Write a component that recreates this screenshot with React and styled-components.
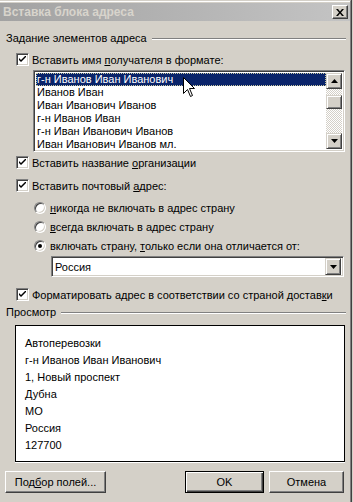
import React from "react";
import styled, { createGlobalStyle } from "styled-components";

const Global = createGlobalStyle`
  html, body {
    margin: 0;
    padding: 0;
    background: #d4d0c8;
  }
  body {
    font-family: "Liberation Sans", Arial, sans-serif;
    font-size: 11px;
    color: #000;
  }
`;

const Window = styled.div`
  width: 350px;
  height: 499px;
  background: #d4d0c8;
  border-top: 1px solid #d4d0c8;
  border-right: 1px solid #808080;
  box-shadow: 1px 0 0 #404040;
  padding-top: 2px;
  position: relative;
  &::before {
    content: "";
    position: absolute;
    left: 0;
    right: 0;
    top: 0;
    height: 1px;
    background: #fff;
  }
`;

const TitleBar = styled.div`
  height: 18px;
  display: flex;
  align-items: center;
  justify-content: space-between;
  padding: 0 2px 0 3px;
  background: linear-gradient(to right, #a2a2a2, #c4c4c4);
  color: #d8d4cc;
  font-weight: bold;
  font-size: 12px;
`;

const CloseButton = styled.div`
  width: 16px;
  height: 14px;
  box-sizing: border-box;
  display: flex;
  align-items: center;
  justify-content: center;
  background: #d4d0c8;
  border: 1px solid;
  border-color: #fff #404040 #404040 #fff;
  box-shadow: inset -1px -1px #808080;
`;

const Body = styled.div`
  display: flex;
  flex-direction: column;
`;

const GroupHeader = styled.div`
  display: flex;
  align-items: center;
  gap: 5px;
  height: 14px;
  margin-top: ${(p) => p.$top}px;
  padding-left: 6px;
  margin-right: 4px;
`;

const EtchedLine = styled.div`
  flex: 1;
  border-top: 1px solid #808080;
  border-bottom: 1px solid #fff;
  margin-top: 1px;
`;

const OptionRow = styled.label`
  display: flex;
  align-items: center;
  gap: ${(p) => p.$gap || 3}px;
  height: 13px;
  margin-top: ${(p) => p.$top}px;
  padding-left: ${(p) => p.$indent}px;
  white-space: nowrap;
`;

const CheckBox = styled.span`
  width: 13px;
  height: 13px;
  box-sizing: border-box;
  flex: none;
  display: flex;
  align-items: center;
  justify-content: center;
  background: #fff;
  border: 1px solid;
  border-color: #808080 #fff #fff #808080;
  box-shadow: inset 1px 1px #404040, inset -1px -1px #d4d0c8;
`;

const Radio = styled.span`
  width: 12px;
  height: 12px;
  box-sizing: border-box;
  flex: none;
  margin-left: -1px;
  border-radius: 50%;
  background: #fff;
  border: 1px solid;
  border-color: #808080 #fff #fff #808080;
  box-shadow: inset 1px 1px #404040, inset -1px -1px #d4d0c8;
  display: flex;
  align-items: center;
  justify-content: center;
  &::after {
    content: "";
    width: 4px;
    height: 4px;
    border-radius: 50%;
    background: #000;
    display: ${(p) => (p.$checked ? "block" : "none")};
  }
`;

const Sunken = styled.div`
  box-sizing: border-box;
  background: #fff;
  border: 1px solid;
  border-color: #808080 #fff #fff #808080;
  box-shadow: inset 1px 1px #404040, inset -1px -1px #d4d0c8;
`;

const ListBox = styled(Sunken)`
  position: relative;
  display: flex;
  height: 82px;
  margin: 4px 5px 0 33px;
  padding: 2px;
`;

const Items = styled.div`
  flex: 1;
  display: flex;
  flex-direction: column;
`;

const ListItem = styled.div`
  height: 13px;
  line-height: 13px;
  padding-left: 1px;
  box-sizing: border-box;
  white-space: nowrap;
  background: ${(p) => (p.$selected ? "#0a246a" : "transparent")};
  color: ${(p) => (p.$selected ? "#fff" : "#000")};
  outline: ${(p) => (p.$selected ? "1px dotted #c8c8a0" : "none")};
  outline-offset: -1px;
`;

const ScrollBar = styled.div`
  width: 16px;
  display: flex;
  flex-direction: column;
`;

const Raised = styled.div`
  box-sizing: border-box;
  background: #d4d0c8;
  border: 1px solid;
  border-color: #d4d0c8 #404040 #404040 #d4d0c8;
  box-shadow: inset 1px 1px #fff, inset -1px -1px #808080;
  display: flex;
  align-items: center;
  justify-content: center;
`;

const ScrollButton = styled(Raised)`
  height: 16px;
  flex: none;
`;

const Track = styled.div`
  flex: 1;
  background: repeating-conic-gradient(#d4d0c8 0 25%, #fff 0 50%) 0 0 / 2px 2px;
  display: flex;
  flex-direction: column;
  padding-top: 6px;
`;

const Thumb = styled(Raised)`
  height: 14px;
`;

const Cursor = styled.svg`
  position: absolute;
  left: 149px;
  top: 6px;
`;

const Combo = styled(Sunken)`
  display: flex;
  align-items: center;
  height: 21px;
  margin: 4px 6px 0 51px;
  padding: 2px;
`;

const ComboText = styled.div`
  flex: 1;
  padding-left: 1px;
`;

const DropButton = styled(Raised)`
  width: 16px;
  height: 17px;
`;

const Preview = styled.div`
  height: 137px;
  box-sizing: border-box;
  margin: 6px 5px 0 15px;
  padding: 9px 9px;
  background: #fff;
  border: 1px solid #000;
  box-shadow: 0 1px 0 #fff;
`;

const PreviewLine = styled.div`
  line-height: 17px;
  height: 17px;
`;

const ButtonBar = styled.div`
  display: flex;
  margin: 9px 6px 0 5px;
  gap: 5px;
`;

const Button = styled.button`
  font: inherit;
  color: #000;
  height: 22px;
  width: ${(p) => p.$w}px;
  padding: 0;
  box-sizing: border-box;
  background: #d4d0c8;
  margin-left: ${(p) => (p.$push ? "auto" : "0")};
  border: 1px solid;
  border-color: ${(p) => (p.$default ? "#000" : "#fff #404040 #404040 #fff")};
  box-shadow: ${(p) =>
    p.$default
      ? "inset 1px 1px #fff, inset -1px -1px #404040, inset -2px -2px #808080"
      : "inset -1px -1px #808080"};
`;

const U = styled.span`
  text-decoration: underline;
`;

const Check = () => (
  <CheckBox>
    <svg width="7" height="7" viewBox="0 0 7 7">
      <path d="M0 2 L0 4 L2 6 L7 1 L7 -1 L2 4 Z" fill="#000" />
    </svg>
  </CheckBox>
);

const ArrowUp = () => (
  <svg width="7" height="4" viewBox="0 0 7 4">
    <path d="M3.5 0 L7 4 L0 4 Z" fill="#000" />
  </svg>
);

const ArrowDown = () => (
  <svg width="7" height="4" viewBox="0 0 7 4">
    <path d="M0 0 L7 0 L3.5 4 Z" fill="#000" />
  </svg>
);

const names = [
  "г-н Иванов Иван Иванович",
  "Иванов Иван",
  "Иван Иванович Иванов",
  "г-н Иванов Иван",
  "г-н Иван Иванович Иванов",
  "Иван Иванович Иванов мл.",
];

const preview = [
  "Автоперевозки",
  "г-н Иванов Иван Иванович",
  "1, Новый проспект",
  "Дубна",
  "МО",
  "Россия",
  "127700",
];

export default function App() {
  return (
    <>
      <Global />
      <Window>
        <TitleBar>
          <span>Вставка блока адреса</span>
          <CloseButton>
            <svg width="8" height="7" viewBox="0 0 8 7">
              <path d="M0 0 L2 0 L4 2.5 L6 0 L8 0 L5 3.5 L8 7 L6 7 L4 4.5 L2 7 L0 7 L3 3.5 Z" fill="#000" />
            </svg>
          </CloseButton>
        </TitleBar>
        <Body>
          <GroupHeader $top={10}>
            <span>Задание элементов адреса</span>
            <EtchedLine />
          </GroupHeader>

          <OptionRow $top={8} $indent={16}>
            <Check />
            <span>
              Вставить имя <U>п</U>олучателя в формате:
            </span>
          </OptionRow>

          <ListBox>
            <Items>
              {names.map((n, i) => (
                <ListItem key={n} $selected={i === 0}>
                  {n}
                </ListItem>
              ))}
            </Items>
            <ScrollBar>
              <ScrollButton>
                <ArrowUp />
              </ScrollButton>
              <Track>
                <Thumb />
              </Track>
              <ScrollButton>
                <ArrowDown />
              </ScrollButton>
            </ScrollBar>
            <Cursor width="13" height="21" viewBox="0 0 13 21">
              <path
                d="M0.5 0.5 L0.5 16.5 L4.5 12.5 L7.5 19.5 L9.5 18.5 L6.5 11.5 L11.5 11.5 Z"
                fill="#fff"
                stroke="#000"
                strokeWidth="1"
              />
            </Cursor>
          </ListBox>

          <OptionRow $top={4} $indent={16}>
            <Check />
            <span>
              Вставить название <U>о</U>рганизации
            </span>
          </OptionRow>

          <OptionRow $top={10} $indent={16}>
            <Check />
            <span>
              Вставить почтовый <U>а</U>дрес:
            </span>
          </OptionRow>

          <OptionRow $top={9} $indent={35} $gap={4}>
            <Radio />
            <span>
              <U>н</U>икогда не включать в адрес страну
            </span>
          </OptionRow>
          <OptionRow $top={6} $indent={35} $gap={4}>
            <Radio />
            <span>
              <U>в</U>сегда включать в адрес страну
            </span>
          </OptionRow>
          <OptionRow $top={6} $indent={35} $gap={4}>
            <Radio $checked />
            <span>
              включать страну, <U>т</U>олько если она отличается от:
            </span>
          </OptionRow>

          <Combo>
            <ComboText>Россия</ComboText>
            <DropButton>
              <ArrowDown />
            </DropButton>
          </Combo>

          <OptionRow $top={11} $indent={16}>
            <Check />
            <span>
              Форматировать адрес в соответствии со страной достав<U>к</U>и
            </span>
          </OptionRow>

          <GroupHeader $top={4}>
            <span>Просмотр</span>
            <EtchedLine />
          </GroupHeader>

          <Preview>
            {preview.map((l) => (
              <PreviewLine key={l}>{l}</PreviewLine>
            ))}
          </Preview>

          <ButtonBar>
            <Button $w={101}>
              Под<U>б</U>ор полей...
            </Button>
            <Button $w={79} $default $push>
              OK
            </Button>
            <Button $w={75}>Отмена</Button>
          </ButtonBar>
        </Body>
      </Window>
    </>
  );
}
